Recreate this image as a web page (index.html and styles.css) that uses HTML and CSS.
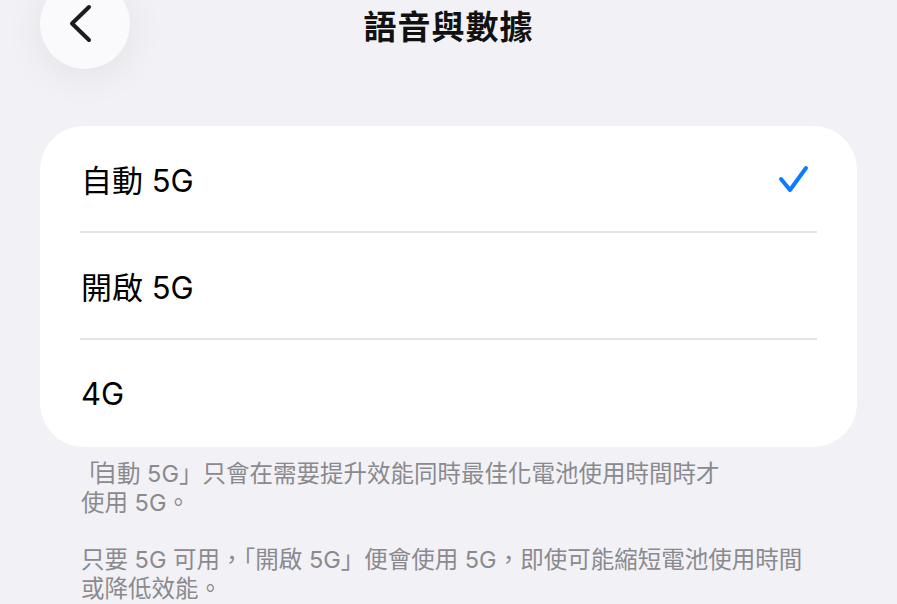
FILE: index.html
```html
<!DOCTYPE html>
<html lang="zh-Hant">
<head>
    <meta charset="UTF-8">
    <meta name="viewport" content="width=device-width, initial-scale=1.0">
    <title>語音與數據</title>
    <link rel="stylesheet" href="styles.css">
</head>
<body>
    <div class="page">
        <header class="nav">
            <button class="back" aria-label="返回">
                <svg width="30" height="40" viewBox="0 0 30 40">
                    <polyline points="21,3 4,19.5 21,36" fill="none" stroke="#1c1c1e" stroke-width="4" stroke-linecap="round" stroke-linejoin="round"/>
                </svg>
            </button>
            <h1 class="title">語音與數據</h1>
            <div></div>
        </header>

        <div class="card">
            <div class="row">
                <span class="label">自動 5G</span>
                <svg class="check" width="32" height="32" viewBox="0 0 32 32">
                    <polyline points="4,16 13,27 29,5" fill="none" stroke="#0a7cff" stroke-width="4" stroke-linecap="round" stroke-linejoin="round"/>
                </svg>
            </div>
            <div class="row">
                <span class="label">開啟 5G</span>
            </div>
            <div class="row">
                <span class="label">4G</span>
            </div>
        </div>

        <div class="footer">
            <p><span class="open">「</span>自動 5G」只會在需要提升效能同時最佳化電池使用時間時才<br>使用 5G。</p>
            <p>只要 5G 可用，「開啟 5G」便會使用 5G，即使可能縮短電池使用時間<br>或降低效能。</p>
        </div>
    </div>
</body>
</html>
```

FILE: styles.css
```css
body {
    margin: 0;
    background: #f2f1f6;
    font-family: 'Inter', 'Noto Sans CJK TC', sans-serif;
    color: #000;
    height: 604px;
    overflow: hidden;
}

.page {
    padding: 0 40px;
}

.nav {
    display: grid;
    grid-template-columns: 1fr auto 1fr;
    grid-template-rows: 50px;
    align-items: center;
}

.back {
    width: 90px;
    height: 90px;
    margin-top: -2px;
    border: none;
    border-radius: 50%;
    background: #fafafd;
    box-shadow: 0 6px 40px rgba(0, 0, 0, 0.07);
    display: flex;
    align-items: center;
    justify-content: center;
    padding: 0 4px 0 0;
}

.title {
    margin: 0;
    font-family: 'Noto Sans CJK TC', sans-serif;
    font-size: 33px;
    font-weight: 700;
    letter-spacing: 1px;
    line-height: 1;
    color: #111;
}

.card {
    margin-top: 76px;
    background: #fff;
    border-radius: 44px;
    padding: 0 40px;
}

.row {
    height: 105px;
    display: flex;
    align-items: center;
    justify-content: space-between;
    border-bottom: 2px solid #e4e4e8;
    padding-left: 1px;
}

.row:last-child {
    border-bottom: none;
    height: 107px;
    padding-bottom: 5px;
    box-sizing: border-box;
}

.label {
    font-size: 31px;
    line-height: 1;
    padding-top: 4px;
}

.check {
    margin-right: 8px;
}

.footer {
    padding: 12px 0 0 41px;
    color: #8a8a8e;
    font-size: 23.5px;
    line-height: 29px;
    white-space: nowrap;
}

.footer p {
    margin: 0 0 28px;
}

.open {
    margin-left: -5px;
    letter-spacing: -6px;
}
```
